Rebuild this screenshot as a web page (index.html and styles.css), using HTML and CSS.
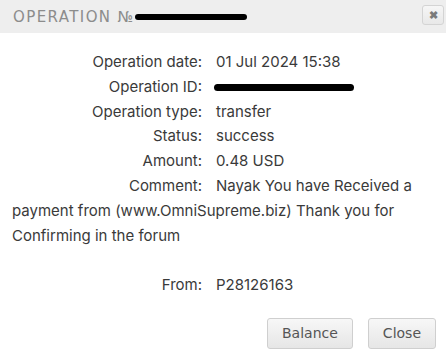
FILE: index.html
```html
<!DOCTYPE html>
<html lang="en">
<head>
    <meta charset="UTF-8">
    <meta name="viewport" content="width=device-width, initial-scale=1.0">
    <title>Operation</title>
    <link rel="stylesheet" href="styles.css">
</head>
<body>
    <div class="dialog">
        <div class="dialog-header">
            <span class="dialog-title">OPERATION №<span class="redact redact-title"></span></span>
            <button class="close-x" aria-label="Close">&#x2716;</button>
        </div>

        <div class="dialog-body">
            <div class="row"><span class="label">Operation date:</span><span class="value">01 Jul 2024 15:38</span></div>
            <div class="row"><span class="label">Operation ID:</span><span class="value"><span class="redact redact-id"></span></span></div>
            <div class="row"><span class="label">Operation type:</span><span class="value">transfer</span></div>
            <div class="row"><span class="label">Status:</span><span class="value">success</span></div>
            <div class="row"><span class="label">Amount:</span><span class="value">0.48 USD</span></div>
            <div class="row"><span class="label">Comment:</span><span class="value">Nayak You have Received a payment from (www.OmniSupreme.biz) Thank you for Confirming in the forum</span></div>
            <div class="row row-gap"><span class="label">From:</span><span class="value">P28126163</span></div>
        </div>

        <div class="dialog-footer">
            <button class="btn">Balance</button>
            <button class="btn">Close</button>
        </div>
    </div>
</body>
</html>
```

FILE: styles.css
```css
body {
    margin: 0;
    font-family: Inter, "Open Sans", sans-serif;
    background-color: #fff;
    color: #3a3a3a;
}
.dialog {
    width: 446px;
    height: 358px;
    display: flex;
    flex-direction: column;
}
.dialog-header {
    height: 33px;
    background-color: #eeeeee;
    display: flex;
    align-items: center;
    justify-content: space-between;
    padding: 0 2px 0 13px;
}
.dialog-title {
    font-family: "DejaVu Sans", sans-serif;
    font-size: 15px;
    letter-spacing: 1.4px;
    color: #8c8c8c;
    display: flex;
    align-items: center;
}
.redact {
    display: inline-block;
    background-color: #000;
    border-radius: 4px;
}
.redact-title {
    width: 112px;
    height: 6px;
    margin-left: 0;
    margin-top: 1px;
}
.redact-id {
    width: 140px;
    height: 7px;
    vertical-align: middle;
    margin-left: -2px;
}
.close-x {
    width: 22px;
    height: 20px;
    padding: 0;
    margin-top: -3px;
    border: 1px solid #d4d4d4;
    border-radius: 3px;
    background: linear-gradient(#f6f6f6, #e8e8e8);
    color: #7a7a7a;
    font-size: 11px;
    font-weight: bold;
    line-height: 18px;
    cursor: pointer;
}
.dialog-body {
    padding: 17px 12px 0 12px;
    font-size: 15px;
    line-height: 24.8px;
}
.label {
    display: inline-block;
    width: 190px;
    text-align: right;
}
.value {
    margin-left: 14px;
}
.row-gap {
    margin-top: 24.8px;
}
.dialog-footer {
    display: flex;
    justify-content: flex-end;
    gap: 15px;
    padding: 20px 10px 0 0;
}
.btn {
    height: 31px;
    padding: 0 14px;
    border: 1px solid #cfcfcf;
    border-radius: 3px;
    background: linear-gradient(#f7f7f7, #e6e6e6);
    color: #555;
    font-family: "DejaVu Sans", sans-serif;
    font-size: 14px;
    cursor: pointer;
}
```
